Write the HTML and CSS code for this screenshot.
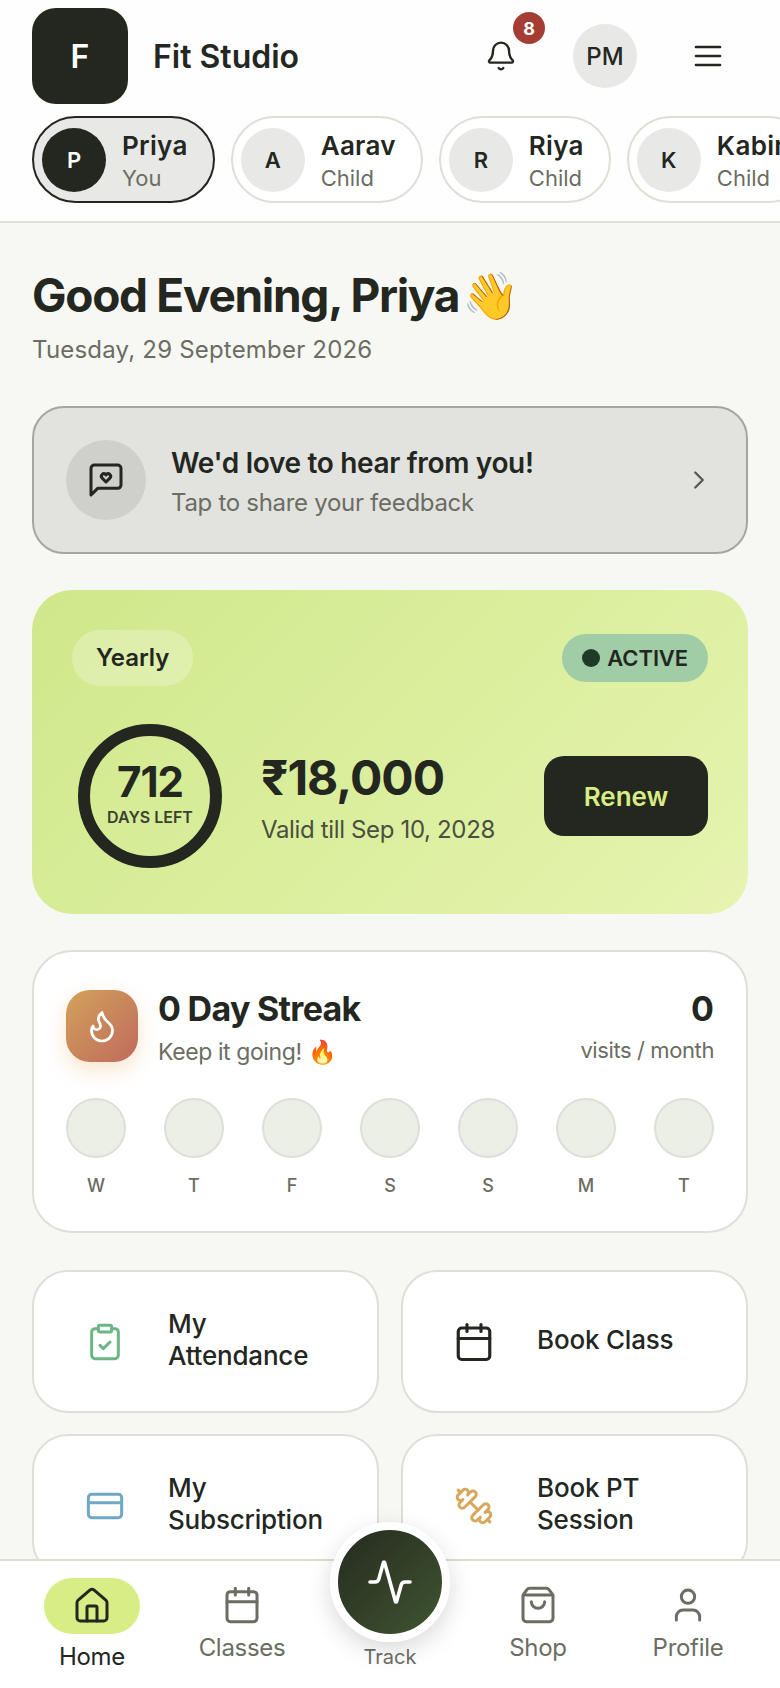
FILE: index.html
```html
<!DOCTYPE html>
<html lang="en">
<head>
<meta charset="UTF-8">
<title>Fit Studio</title>
<link rel="stylesheet" href="styles.css">
</head>
<body>
<div class="app">

  <header class="top">
    <div class="top-bar">
      <div class="logo">F</div>
      <div class="brand">Fit Studio</div>
      <div class="bell">
        <svg class="ico" width="32" height="32" viewBox="0 0 24 24"><path d="M10.268 21a2 2 0 0 0 3.464 0"/><path d="M3.262 15.326A1 1 0 0 0 4 17h16a1 1 0 0 0 .74-1.673C19.41 13.956 18 12.499 18 8A6 6 0 0 0 6 8c0 4.499-1.411 5.956-2.738 7.326"/></svg>
        <span class="badge">8</span>
      </div>
      <div class="me">PM</div>
      <svg class="ico menu" width="36" height="36" viewBox="0 0 24 24"><path d="M4 6h16"/><path d="M4 12h16"/><path d="M4 18h16"/></svg>
    </div>
    <div class="members">
      <div class="member active">
        <span class="member-av">P</span>
        <span class="member-txt"><b>Priya</b><small>You</small></span>
      </div>
      <div class="member">
        <span class="member-av">A</span>
        <span class="member-txt"><b>Aarav</b><small>Child</small></span>
      </div>
      <div class="member">
        <span class="member-av">R</span>
        <span class="member-txt"><b>Riya</b><small>Child</small></span>
      </div>
      <div class="member">
        <span class="member-av">K</span>
        <span class="member-txt"><b>Kabir</b><small>Child</small></span>
      </div>
    </div>
  </header>

  <main class="content">
    <h1 class="hello"><span>Good Evening, Priya</span><span class="emoji">👋</span></h1>
    <p class="date">Tuesday, 29 September 2026</p>

    <section class="feedback">
      <span class="feedback-ico">
        <svg class="ico" width="40" height="40" viewBox="0 0 24 24"><path d="M21 15a2 2 0 0 1-2 2H7l-4 4V5a2 2 0 0 1 2-2h14a2 2 0 0 1 2 2z"/><path d="M12 13.2l-2.3-2.3a1.5 1.5 0 0 1 2.1-2.2l.2.2.2-.2a1.5 1.5 0 0 1 2.1 2.2z"/></svg>
      </span>
      <div class="feedback-txt">
        <h2>We'd love to hear from you!</h2>
        <p>Tap to share your feedback</p>
      </div>
      <svg class="ico chev" width="30" height="30" viewBox="0 0 24 24"><path d="m9 18 6-6-6-6"/></svg>
    </section>

    <section class="plan">
      <div class="plan-top">
        <span class="plan-name">Yearly</span>
        <span class="plan-status"><i></i>ACTIVE</span>
      </div>
      <div class="plan-main">
        <div class="ring">
          <strong>712</strong>
          <span>DAYS LEFT</span>
        </div>
        <div class="plan-price">
          <strong>₹18,000</strong>
          <span>Valid till Sep 10, 2028</span>
        </div>
        <button type="button" class="renew">Renew</button>
      </div>
    </section>

    <section class="streak">
      <div class="streak-top">
        <span class="streak-ico">
          <svg class="ico" width="36" height="36" viewBox="0 0 24 24"><path d="M8.5 14.5A2.5 2.5 0 0 0 11 12c0-1.38-.5-2-1-3-1.072-2.143-.224-4.054 2-6 .5 2.5 2 4.9 4 6.5 2 1.6 3 3.5 3 5.5a7 7 0 1 1-14 0c0-1.153.433-2.294 1-3a2.5 2.5 0 0 0 2.5 2.5z"/></svg>
        </span>
        <div class="streak-txt">
          <h2>0 Day Streak</h2>
          <p>Keep it going! 🔥</p>
        </div>
        <div class="streak-count">
          <strong>0</strong>
          <span>visits / month</span>
        </div>
      </div>
      <div class="week">
        <div class="day"><i></i><span>W</span></div>
        <div class="day"><i></i><span>T</span></div>
        <div class="day"><i></i><span>F</span></div>
        <div class="day"><i></i><span>S</span></div>
        <div class="day"><i></i><span>S</span></div>
        <div class="day"><i></i><span>M</span></div>
        <div class="day"><i></i><span>T</span></div>
      </div>
    </section>

    <section class="actions">
      <div class="action">
        <span class="action-ico green">
          <svg class="ico" width="40" height="40" viewBox="0 0 24 24"><rect x="8" y="2" width="8" height="4" rx="1"/><path d="M16 4h2a2 2 0 0 1 2 2v14a2 2 0 0 1-2 2H6a2 2 0 0 1-2-2V6a2 2 0 0 1 2-2h2"/><path d="m9 14 2 2 4-4"/></svg>
        </span>
        <span class="action-txt">My<br>Attendance</span>
      </div>
      <div class="action">
        <span class="action-ico">
          <svg class="ico" width="42" height="42" viewBox="0 0 24 24"><path d="M8 2v4"/><path d="M16 2v4"/><rect x="3" y="4" width="18" height="18" rx="2"/><path d="M3 10h18"/></svg>
        </span>
        <span class="action-txt">Book Class</span>
      </div>
      <div class="action">
        <span class="action-ico blue">
          <svg class="ico" width="40" height="40" viewBox="0 0 24 24"><rect x="2" y="5" width="20" height="14" rx="2"/><path d="M2 10h20"/></svg>
        </span>
        <span class="action-txt">My<br>Subscription</span>
      </div>
      <div class="action">
        <span class="action-ico gold">
          <svg class="ico" width="40" height="40" viewBox="0 0 24 24"><path d="M14.4 14.4 9.6 9.6"/><path d="M18.657 21.485a2 2 0 1 1-2.829-2.828l-1.767 1.768a2 2 0 1 1-2.829-2.829l6.364-6.364a2 2 0 1 1 2.829 2.829l-1.768 1.767a2 2 0 1 1 2.828 2.829z"/><path d="m21.5 21.5-1.4-1.4"/><path d="M3.9 3.9 2.5 2.5"/><path d="M6.404 12.768a2 2 0 1 1-2.829-2.829l1.768-1.767a2 2 0 1 1-2.828-2.829l2.828-2.828a2 2 0 1 1 2.829 2.828l1.767-1.768a2 2 0 1 1 2.829 2.829z"/></svg>
        </span>
        <span class="action-txt">Book PT<br>Session</span>
      </div>
    </section>
  </main>

  <nav class="nav">
    <div class="nav-item current">
      <span class="nav-pill">
        <svg class="ico" width="40" height="40" viewBox="0 0 24 24"><path d="M15 21v-8a1 1 0 0 0-1-1h-4a1 1 0 0 0-1 1v8"/><path d="M3 10a2 2 0 0 1 .709-1.528l7-5.999a2 2 0 0 1 2.582 0l7 5.999A2 2 0 0 1 21 10v9a2 2 0 0 1-2 2H5a2 2 0 0 1-2-2z"/></svg>
      </span>
      <span>Home</span>
    </div>
    <div class="nav-item">
      <svg class="ico" width="40" height="40" viewBox="0 0 24 24"><path d="M8 2v4"/><path d="M16 2v4"/><rect x="3" y="4" width="18" height="18" rx="2"/><path d="M3 10h18"/></svg>
      <span>Classes</span>
    </div>
    <div class="nav-item track">
      <span class="track-btn">
        <svg class="ico" width="48" height="48" viewBox="0 0 24 24"><path d="M22 12h-2.48a2 2 0 0 0-1.93 1.46l-2.35 8.36a.25.25 0 0 1-.48 0L9.24 2.18a.25.25 0 0 0-.48 0l-2.35 8.36A2 2 0 0 1 4.49 12H2"/></svg>
      </span>
      <span>Track</span>
    </div>
    <div class="nav-item">
      <svg class="ico" width="40" height="40" viewBox="0 0 24 24"><path d="M16 10a4 4 0 0 1-8 0"/><path d="M3.103 6.034h17.794"/><path d="M3.4 5.467a2 2 0 0 0-.4 1.2V20a2 2 0 0 0 2 2h14a2 2 0 0 0 2-2V6.667a2 2 0 0 0-.4-1.2l-2-2.667A2 2 0 0 0 17 2H7a2 2 0 0 0-1.6.8z"/></svg>
      <span>Shop</span>
    </div>
    <div class="nav-item">
      <svg class="ico" width="40" height="40" viewBox="0 0 24 24"><path d="M19 21v-2a4 4 0 0 0-4-4H9a4 4 0 0 0-4 4v2"/><circle cx="12" cy="7" r="4"/></svg>
      <span>Profile</span>
    </div>
  </nav>

</div>
</body>
</html>
```

FILE: styles.css
```css
* {
  box-sizing: border-box;
  margin: 0;
  padding: 0;
}

html, body {
  height: 100%;
  overflow: hidden;
}

body {
  font-family: "Inter", "Liberation Sans", sans-serif;
  color: #23271f;
  background: #f7f8f4;
}

.app {
  display: flex;
  flex-direction: column;
  height: 1688px;
}

.ico {
  display: block;
  fill: none;
  stroke: currentColor;
  stroke-width: 1.8;
  stroke-linecap: round;
  stroke-linejoin: round;
  flex: none;
}

/* header */
.top {
  flex: none;
  height: 223px;
  background: #fefefe;
  border-bottom: 2px solid #dfdfd7;
  padding: 8px 0 0 32px;
  overflow: hidden;
}

.top-bar {
  display: flex;
  align-items: center;
  height: 96px;
  padding-right: 54px;
}

.logo {
  width: 96px;
  height: 96px;
  border-radius: 24px;
  background: #23271f;
  color: #fff;
  font-size: 32px;
  font-weight: 600;
  display: flex;
  align-items: center;
  justify-content: center;
}

.brand {
  margin-left: 25px;
  font-size: 32px;
  font-weight: 600;
  flex: 1;
}

.bell {
  position: relative;
  margin-right: 56px;
}

.badge {
  position: absolute;
  top: -28px;
  left: 28px;
  width: 32px;
  height: 32px;
  border-radius: 50%;
  background: #a63d35;
  color: #fff;
  font-size: 18px;
  font-weight: 700;
  display: flex;
  align-items: center;
  justify-content: center;
}

.me {
  width: 64px;
  height: 64px;
  border-radius: 50%;
  background: #e8e9e6;
  font-size: 24px;
  font-weight: 500;
  display: flex;
  align-items: center;
  justify-content: center;
  margin-right: 53px;
}

.members {
  display: flex;
  gap: 16px;
  margin-top: 12px;
  width: 900px;
}

.member {
  flex: none;
  display: flex;
  align-items: center;
  height: 87px;
  padding: 0 25px 0 8px;
  border: 2px solid #dfdfd7;
  border-radius: 44px;
  background: #fff;
}

.member.active {
  border-color: #23271f;
  background: #e8e9e6;
}

.member-av {
  width: 64px;
  height: 64px;
  border-radius: 50%;
  background: #e8e9e6;
  font-size: 22px;
  font-weight: 600;
  display: flex;
  align-items: center;
  justify-content: center;
  margin-right: 16px;
}

.member.active .member-av {
  background: #23271f;
  color: #fff;
}

.member-txt {
  display: flex;
  flex-direction: column;
  padding-top: 4px;
}

.member-txt b {
  font-size: 26px;
  font-weight: 600;
  line-height: 32px;
  letter-spacing: 0.3px;
}

.member-txt small {
  margin-top: 1px;
  font-size: 22px;
  line-height: 30px;
  color: #6b6d62;
}

/* main column */
.content {
  flex: 1;
  min-height: 0;
  overflow: hidden;
  padding: 44px 32px 0;
}

.hello {
  display: flex;
  gap: 3px;
  font-size: 46px;
  font-weight: 700;
  line-height: 56px;
  letter-spacing: -1.3px;
}

.emoji {
  letter-spacing: 0;
}

.date {
  margin-top: 11px;
  font-size: 24px;
  line-height: 32px;
  letter-spacing: 0.2px;
  color: #6b6d62;
}

.feedback {
  display: flex;
  align-items: center;
  height: 148px;
  margin-top: 40px;
  padding: 0 32px;
  background: #e2e3df;
  border: 2px solid #a5a69f;
  border-radius: 32px;
}

.feedback-ico {
  width: 80px;
  height: 80px;
  border-radius: 50%;
  background: #cfd0cb;
  display: flex;
  align-items: center;
  justify-content: center;
  margin-right: 25px;
}

.feedback-txt {
  flex: 1;
  padding-top: 3px;
}

.feedback-txt h2 {
  font-size: 28px;
  font-weight: 600;
  line-height: 36px;
  letter-spacing: -0.33px;
}

.feedback-txt p {
  margin-top: 6px;
  font-size: 24px;
  line-height: 32px;
  letter-spacing: -0.3px;
  color: #6b6d62;
}

.chev {
  color: #55574e;
}

/* plan card */
.plan {
  height: 324px;
  margin-top: 36px;
  padding: 40px 40px 0;
  border-radius: 40px;
  background: linear-gradient(135deg, #cfe88a, #e6f4b0);
}

.plan-top {
  display: flex;
  align-items: center;
  justify-content: space-between;
}

.plan-name {
  height: 56px;
  padding: 0 24px;
  border-radius: 28px;
  background: rgba(255, 255, 255, 0.25);
  font-size: 24px;
  font-weight: 600;
  line-height: 56px;
}

.plan-status {
  display: flex;
  align-items: center;
  height: 48px;
  padding: 0 20px;
  border-radius: 24px;
  background: #a0cca6;
  font-size: 22px;
  font-weight: 600;
  letter-spacing: -0.1px;
}

.plan-status i {
  width: 18px;
  height: 18px;
  border-radius: 50%;
  background: #1f3a26;
  margin-right: 7px;
}

.plan-main {
  display: flex;
  align-items: center;
  margin-top: 38px;
  padding-left: 6px;
}

.ring {
  width: 144px;
  height: 144px;
  padding-bottom: 6px;
  border: 12px solid #23271f;
  border-radius: 50%;
  display: flex;
  flex-direction: column;
  align-items: center;
  justify-content: center;
}

.ring strong {
  font-size: 42px;
  font-weight: 700;
  line-height: 46px;
  letter-spacing: -1px;
}

.ring span {
  margin-top: 2px;
  font-size: 16px;
  font-weight: 600;
  color: #3b4033;
}

.plan-price {
  flex: 1;
  margin-left: 39px;
  padding-top: 4px;
  display: flex;
  flex-direction: column;
}

.plan-price strong {
  font-size: 48px;
  font-weight: 700;
  line-height: 56px;
  letter-spacing: -1px;
}

.plan-price span {
  margin-top: 8px;
  font-size: 24px;
  line-height: 32px;
  letter-spacing: -0.35px;
  color: #4a4f40;
}

.renew {
  width: 164px;
  height: 80px;
  border: 0;
  border-radius: 20px;
  background: #23271f;
  color: #d8ed85;
  font-family: inherit;
  font-size: 26px;
  font-weight: 600;
}

/* streak */
.streak {
  height: 283px;
  margin-top: 36px;
  padding: 38px 32px 0;
  background: #fff;
  border: 2px solid #dedfd8;
  border-radius: 40px;
}

.streak-top {
  display: flex;
  align-items: flex-start;
}

.streak-ico {
  width: 72px;
  height: 72px;
  border-radius: 24px;
  background: linear-gradient(135deg, #d2a25a, #c06a5d);
  box-shadow: 0 8px 20px rgba(230, 170, 90, 0.3);
  color: #fff;
  display: flex;
  align-items: center;
  justify-content: center;
  margin-right: 20px;
}

.streak-txt {
  flex: 1;
}

.streak-txt h2 {
  font-size: 34px;
  font-weight: 700;
  line-height: 38px;
  letter-spacing: -0.7px;
}

.streak-txt p {
  margin-top: 8px;
  font-size: 23px;
  line-height: 32px;
  letter-spacing: -0.4px;
  color: #6b6d62;
}

.streak-count {
  display: flex;
  flex-direction: column;
  align-items: flex-end;
}

.streak-count strong {
  font-size: 34px;
  font-weight: 700;
  line-height: 38px;
}

.streak-count span {
  margin-top: 7px;
  font-size: 22px;
  line-height: 30px;
  letter-spacing: -0.4px;
  color: #6b6d62;
}

.week {
  display: flex;
  justify-content: space-between;
  margin-top: 30px;
}

.day {
  display: flex;
  flex-direction: column;
  align-items: center;
}

.day i {
  width: 60px;
  height: 60px;
  border-radius: 50%;
  background: #ecefe6;
  border: 2px solid #dedfd8;
}

.day span {
  margin-top: 16px;
  font-size: 18px;
  font-weight: 500;
  line-height: 24px;
  color: #6b6d62;
}

/* quick actions */
.actions {
  display: grid;
  grid-template-columns: 1fr 1fr;
  grid-auto-rows: 143px;
  gap: 21px 22px;
  margin-top: 37px;
}

.action {
  display: flex;
  align-items: center;
  padding-left: 7px;
  background: #fff;
  border: 2px solid #dedfd8;
  border-radius: 36px;
}

.action-ico {
  width: 127px;
  display: flex;
  justify-content: center;
  color: #23271f;
  flex: none;
}

.action-ico.green { color: #6db585; }
.action-ico.blue { color: #6fa8c4; }
.action-ico.gold { color: #d9a75a; }

.action-txt {
  padding-bottom: 4px;
  font-size: 26px;
  font-weight: 500;
  line-height: 32px;
  letter-spacing: -0.2px;
}

/* bottom nav */
.nav {
  flex: none;
  position: relative;
  height: 129px;
  display: grid;
  grid-template-columns: 152px 148px 148px 148px 152px;
  padding: 17px 16px 0;
  background: #fff;
  border-top: 2px solid #dddcd2;
}

.nav-item {
  display: flex;
  flex-direction: column;
  align-items: center;
  color: #6b6d62;
  font-size: 24px;
  line-height: 32px;
  letter-spacing: -0.3px;
}

.nav-item .ico {
  margin-top: 7px;
}

.nav-item > span:last-child {
  margin-top: 7px;
}

.nav-pill {
  width: 96px;
  height: 56px;
  border-radius: 28px;
  background: #d8ed85;
  display: flex;
  align-items: center;
  justify-content: center;
  color: #23271f;
}

.nav-pill .ico {
  margin-top: 0;
}

.current {
  color: #23271f;
}

.track {
  font-size: 20px;
  letter-spacing: 0;
}

.nav-item.track > span:last-child {
  margin-top: 63px;
}

.track-btn {
  position: absolute;
  top: -39px;
  left: 330px;
  width: 120px;
  height: 120px;
  border: 8px solid #fff;
  border-radius: 50%;
  background: linear-gradient(135deg, #262b20, #3f5530);
  box-shadow: 0 8px 24px rgba(0, 0, 0, 0.15);
  color: #fff;
  display: flex;
  align-items: center;
  justify-content: center;
}

.track-btn .ico {
  margin-top: 0;
}
```
